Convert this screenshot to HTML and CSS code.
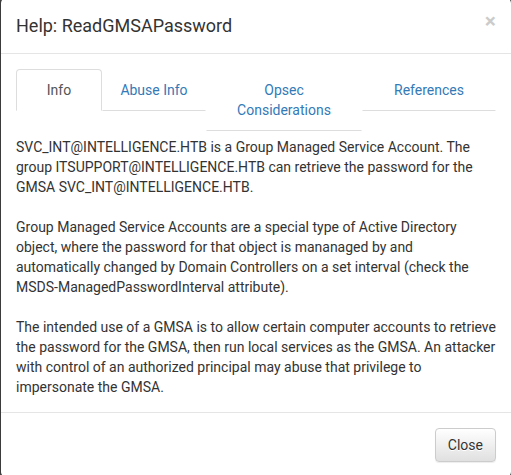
FILE: index.html
```html
<!DOCTYPE html>
<html>
<head>
<meta charset="utf-8">
<link rel="stylesheet" href="styles.css">
</head>
<body>
<div class="modal">
  <div class="modal-header">
    <button class="close" type="button">×</button>
    <h4 class="modal-title">Help: ReadGMSAPassword</h4>
  </div>
  <div class="modal-body">
    <ul class="tabs">
      <li class="tab active"><a>Info</a></li>
      <li class="tab"><a>Abuse Info</a></li>
      <li class="tab"><a>Opsec Considerations</a></li>
      <li class="tab"><a>References</a></li>
    </ul>
    <div class="pane">
      <p>SVC_INT@INTELLIGENCE.HTB is a Group Managed Service Account. The group ITSUPPORT@INTELLIGENCE.HTB can retrieve the password for the GMSA SVC_INT@INTELLIGENCE.HTB.</p>
      <p>Group Managed Service Accounts are a special type of Active Directory object, where the password for that object is mananaged by and automatically changed by Domain Controllers on a set interval (check the MSDS-ManagedPasswordInterval attribute).</p>
      <p>The intended use of a GMSA is to allow certain computer accounts to retrieve the password for the GMSA, then run local services as the GMSA. An attacker with control of an authorized principal may abuse that privilege to impersonate the GMSA.</p>
    </div>
  </div>
  <div class="modal-footer">
    <button class="btn" type="button">Close</button>
  </div>
</div>
</body>
</html>
```
FILE: styles.css
```css
html, body {
  margin: 0;
  padding: 0;
  height: 100%;
  overflow: hidden;
}
body {
  background: #4a4a4a;
  font-family: Roboto, "Liberation Sans", sans-serif;
  font-size: 14px;
  line-height: 20px;
  color: #333;
}
.modal {
  box-sizing: border-box;
  width: 512px;
  margin-top: -3px;
  background: #fff;
  border: 1px solid rgba(0,0,0,.2);
  border-radius: 6px;
  background-clip: padding-box;
}
.modal-header {
  padding: 15px;
  border-bottom: 1px solid #e5e5e5;
  height: 25px;
}
.modal-title {
  margin: 0;
  font-size: 18px;
  font-weight: 400;
  line-height: 26px;
  color: #333;
}
.close {
  float: right;
  margin-top: -2px;
  padding: 0;
  border: 0;
  background: transparent;
  font-family: Roboto, "Liberation Sans", sans-serif;
  font-size: 21px;
  font-weight: 700;
  line-height: 1;
  color: #000;
  opacity: .2;
  text-shadow: 0 1px 0 #fff;
}
.modal-body {
  padding: 15px;
}
.tabs {
  list-style: none;
  margin: 0;
  padding: 0;
  display: grid;
  grid-template-columns: 86px 104px 156px 134px;
}
.tab {
  align-self: start;
}
.tab a {
  display: block;
  padding: 10px 15px;
  text-align: center;
  color: #337ab7;
  border: 1px solid transparent;
  border-bottom-color: #ddd;
  border-radius: 4px 4px 0 0;
}
.tab.active a {
  color: #555;
  border-color: #ddd;
  border-bottom-color: #fff;
}
.pane {
  padding-top: 6px;
}
.pane p {
  margin: 0 0 20px;
}
.pane p:last-child {
  margin-bottom: 0;
}
.modal-footer {
  padding: 15px;
  border-top: 1px solid #e5e5e5;
  display: flex;
  justify-content: flex-end;
}
.btn {
  font-family: Roboto, "Liberation Sans", sans-serif;
  font-size: 14px;
  line-height: 20px;
  padding: 6px 12px;
  color: #333;
  border: 1px solid #ccc;
  border-radius: 4px;
  background: linear-gradient(to bottom, #fff 0, #e0e0e0 100%);
  text-shadow: 0 1px 0 #fff;
  box-shadow: inset 0 1px 0 rgba(255,255,255,.15), 0 1px 1px rgba(0,0,0,.075);
}
```
